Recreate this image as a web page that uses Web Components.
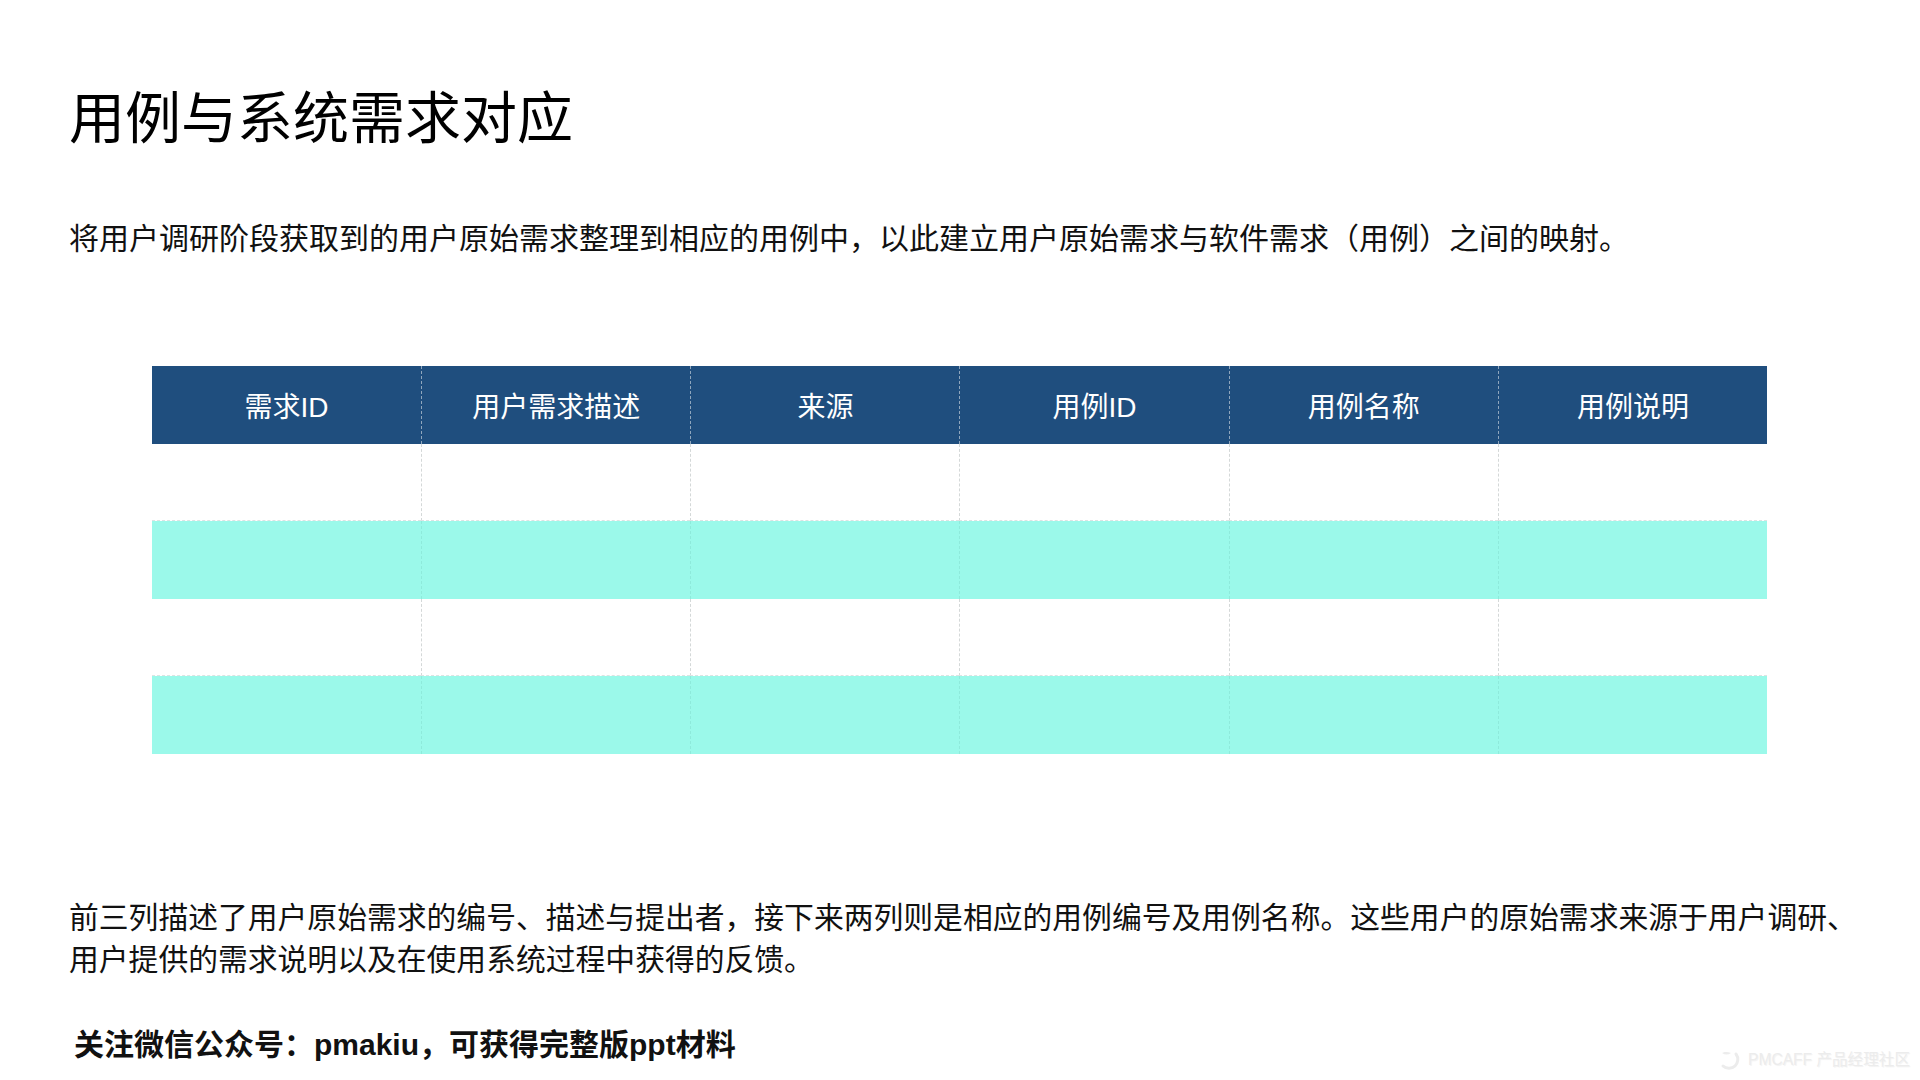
<!DOCTYPE html>
<html lang="zh">
<head>
<meta charset="utf-8">
<title>用例与系统需求对应</title>
<style>
    html, body { margin: 0; background: #fff; }
    body {
        font-family: 'Liberation Sans', 'Noto Sans CJK SC', sans-serif;
        width: 1920px;
        height: 1080px;
        overflow: hidden;
    }
</style>
</head>
<body>
<slide-page>
    <slide-title>用例与系统需求对应</slide-title>
    <slide-text style="margin-top: 61px; font-size: 30px">将用户调研阶段获取到的用户原始需求整理到相应的用例中，以此建立用户原始需求与软件需求（用例）之间的映射。</slide-text>
    <req-table columns="需求ID,用户需求描述,来源,用例ID,用例名称,用例说明" rows="4"></req-table>
    <slide-text style="font-size: 29.8px">前三列描述了用户原始需求的编号、描述与提出者，接下来两列则是相应的用例编号及用例名称。这些用户的原始需求来源于用户调研、用户提供的需求说明以及在使用系统过程中获得的反馈。</slide-text>
    <slide-note>关注微信公众号：pmakiu，可获得完整版ppt材料</slide-note>
</slide-page>
<water-mark></water-mark>

<script>
// Page wrapper
class SlidePage extends HTMLElement {
    constructor() {
        super();
        this.attachShadow({ mode: 'open' });
        this.shadowRoot.innerHTML = `
            <style>
                :host {
                    display: flex;
                    flex-direction: column;
                    box-sizing: border-box;
                    width: 1920px;
                    height: 1080px;
                    padding: 81px 45px 0 69px;
                    color: #000;
                }
            </style>
            <slot></slot>
        `;
    }
}

class SlideTitle extends HTMLElement {
    constructor() {
        super();
        this.attachShadow({ mode: 'open' });
        this.shadowRoot.innerHTML = `
            <style>
                :host {
                    display: block;
                    font-size: 56px;
                    line-height: 76px;
                    color: #000;
                }
            </style>
            <slot></slot>
        `;
    }
}

class SlideText extends HTMLElement {
    constructor() {
        super();
        this.attachShadow({ mode: 'open' });
        this.shadowRoot.innerHTML = `
            <style>
                :host {
                    display: block;
                    font-size: 30px;
                    line-height: 42px;
                    color: #111;
                }
            </style>
            <slot></slot>
        `;
    }
}

class SlideNote extends HTMLElement {
    constructor() {
        super();
        this.attachShadow({ mode: 'open' });
        this.shadowRoot.innerHTML = `
            <style>
                :host {
                    display: block;
                    margin: 43px 0 0 5px;
                    font-size: 30px;
                    line-height: 42px;
                    font-weight: 700;
                    color: #111;
                }
            </style>
            <slot></slot>
        `;
    }
}

// Table: one header row, then blank rows that alternate white and mint
const tableTemplate = document.createElement('template');
tableTemplate.innerHTML = `
    <style>
        :host {
            display: grid;
            grid-template-columns: repeat(6, 1fr);
            grid-auto-rows: 77.6px;
            width: 1615px;
            margin: 106px 0 143px 83px;
            flex: none;
        }
        .cell {
            box-sizing: border-box;
            display: flex;
            align-items: center;
            justify-content: center;
            border-left: 1px dashed #d4d8d8;
        }
        .cell.first { border-left: 0; }
        .head {
            background: #1f4e7e;
            color: #fff;
            font-size: 28px;
            border-left-color: #8fa6bd;
        }
        .odd { background: #fff; border-bottom: 1px dashed #dde3e3; }
        .even { background: #9bf9ea; border-left-color: #8eeadb; }
    </style>
`;

class ReqTable extends HTMLElement {
    constructor() {
        super();
        this.attachShadow({ mode: 'open' });
        this.shadowRoot.appendChild(tableTemplate.content.cloneNode(true));
        const columns = this.getAttribute('columns').split(',');
        const rows = Number(this.getAttribute('rows'));

        columns.forEach((name, i) => {
            this.addCell('head', i === 0, name);
        });
        for (let r = 0; r < rows; r++) {
            columns.forEach((name, i) => {
                this.addCell(r % 2 ? 'even' : 'odd', i === 0, '');
            });
        }
    }

    addCell(kind, first, text) {
        const cell = document.createElement('div');
        cell.className = 'cell ' + kind + (first ? ' first' : '');
        cell.textContent = text;
        this.shadowRoot.appendChild(cell);
    }
}

// Faint stamp in the bottom right corner
class WaterMark extends HTMLElement {
    constructor() {
        super();
        this.attachShadow({ mode: 'open' });
        this.shadowRoot.innerHTML = `
            <style>
                :host {
                    position: absolute;
                    right: 10px;
                    top: 1048px;
                    display: flex;
                    align-items: center;
                    gap: 7px;
                    font-size: 15.6px;
                    line-height: 20px;
                    color: #ececec;
                    text-shadow: 1px 1px 1px #f2f2f2;
                }
                svg { display: block; }
            </style>
            <svg width="24" height="24" viewBox="0 0 24 24" fill="none">
                <path d="M5 5c3 2 6 2 9 0c-3-1.500-7-1.500-9 0z" fill="#ececec"/>
                <path d="M19 6c3 4 2 9-1 12c-3 3-9 3-12 0" stroke="#ececec" stroke-width="3" stroke-linecap="round"/>
            </svg>
            <span>PMCAFF 产品经理社区</span>
        `;
    }
}

customElements.define('slide-page', SlidePage);
customElements.define('slide-title', SlideTitle);
customElements.define('slide-text', SlideText);
customElements.define('slide-note', SlideNote);
customElements.define('req-table', ReqTable);
customElements.define('water-mark', WaterMark);
</script>
</body>
</html>
